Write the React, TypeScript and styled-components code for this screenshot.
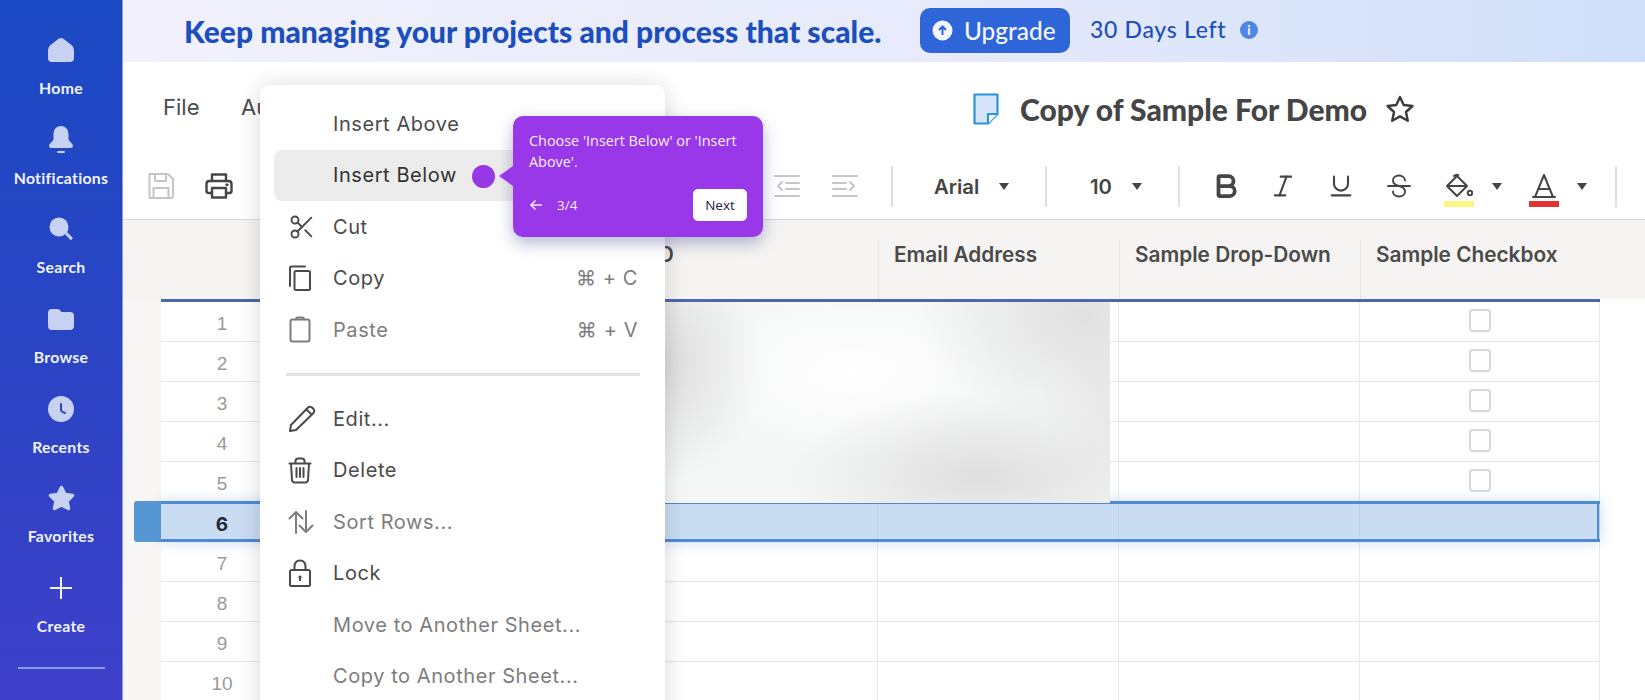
import React from "react";
import styled, { createGlobalStyle } from "styled-components";
import { Scissors, Bold, Italic, Underline } from "lucide-react";

const Global = createGlobalStyle`
  html, body { margin: 0; padding: 0; background: #fff; }
  * { box-sizing: border-box; }
`;

const Page = styled.div`
  position: relative;
  display: flex;
  width: 1645px;
  height: 700px;
  overflow: hidden;
  font-family: Inter, "Liberation Sans", sans-serif;
`;

const Sidebar = styled.nav`
  flex: 0 0 123px;
  display: flex;
  flex-direction: column;
  align-items: center;
  padding-top: 36px;
  background: linear-gradient(180deg, #1b49c3 0%, #2a44c4 50%, #3f40c9 100%);
  border-right: 1px solid #8f9ce0;
`;

const NavItem = styled.div`
  flex: 0 0 89.7px;
  display: flex;
  flex-direction: column;
  align-items: center;
  width: 100%;
`;

const NavIcon = styled.div`
  height: 28px;
  display: flex;
  align-items: center;
  justify-content: center;
  color: #c7d2f3;
`;

const NavLabel = styled.div`
  margin-top: 13px;
  line-height: 22px;
  color: #f0f3fd;
  font-family: Lato, sans-serif;
  font-weight: 700;
  font-size: 15.8px;
  letter-spacing: 0.3px;
`;

const NavRule = styled.div`
  width: 87px;
  height: 2px;
  margin-top: 3px;
  background: #8d96e2;
`;

const Main = styled.div`
  flex: 1;
  min-width: 0;
  display: flex;
  flex-direction: column;
`;

const Banner = styled.header`
  flex: 0 0 62px;
  display: flex;
  align-items: center;
  padding: 0 0 1px 61px;
  background: linear-gradient(90deg, #f2f1fc 0%, #e6eafb 55%, #cfdff9 100%);
`;

const BannerText = styled.div`
  width: 736px;
  font-family: Lato, sans-serif;
  font-weight: 900;
  font-size: 30px;
  color: #1c4fbe;
  white-space: nowrap;
`;

const UpgradeButton = styled.div`
  width: 150px;
  height: 45px;
  display: flex;
  align-items: center;
  gap: 11px;
  padding-left: 12px;
  border-radius: 10px;
  background: #2e65d9;
  color: #f3f6fe;
  font-family: Lato, sans-serif;
  font-weight: 500;
  font-size: 24.4px;
`;

const DaysLeft = styled.div`
  margin-left: 20px;
  margin-top: -4px;
  width: 150px;
  font-family: Lato, sans-serif;
  font-weight: 500;
  font-size: 23px;
  letter-spacing: 0.7px;
  color: #1e50b8;
  white-space: nowrap;
`;

const InfoDot = styled.div`
  width: 18px;
  height: 18px;
  margin-top: -2px;
  border-radius: 50%;
  background: #4f85e3;
  color: #e8effd;
  font-family: Lato, sans-serif;
  font-weight: 900;
  font-size: 13px;
  line-height: 18px;
  text-align: center;
`;

const TitleBar = styled.div`
  flex: 0 0 88px;
  display: flex;
  align-items: center;
  padding: 2px 0 0 40px;
`;

const MenuLabel = styled.div<{ $w: number }>`
  width: ${(p) => p.$w}px;
  font-size: 22px;
  color: #4b4b4b;
`;

const DocTitle = styled.div`
  display: flex;
  align-items: center;
  margin-left: 702px;
  margin-top: 4px;
`;

const TitleText = styled.h1`
  margin: 0 18px 0 21px;
  font-family: Lato, sans-serif;
  font-weight: 900;
  font-size: 30px;
  color: #454545;
  white-space: nowrap;
`;

const Toolbar = styled.div`
  flex: 0 0 70px;
  display: flex;
  align-items: center;
  padding: 3px 0 0 9px;
  border-bottom: 1px solid #dcdcdc;
`;

const Slot = styled.div<{ $w: number; $faded?: boolean }>`
  flex: 0 0 ${(p) => p.$w}px;
  display: flex;
  align-items: center;
  justify-content: center;
  color: ${(p) => (p.$faded ? "#c6c6c6" : "#454545")};
`;

const Gap = styled.div<{ $w: number }>`
  flex: 0 0 ${(p) => p.$w}px;
`;

const ToolSep = styled.div`
  flex: 0 0 2px;
  height: 41px;
  background: #e0e0e0;
`;

const Picker = styled.div<{ $w: number; $pad: number }>`
  flex: 0 0 ${(p) => p.$w}px;
  display: flex;
  align-items: center;
  gap: 20px;
  padding-left: ${(p) => p.$pad}px;
  color: #444;
  font-size: 20.3px;
  font-weight: 600;
`;

const Caret = styled.span`
  flex: none;
  width: 0;
  height: 0;
  border-left: 5px solid transparent;
  border-right: 5px solid transparent;
  border-top: 7px solid #444;
`;

const Swatch = styled.div<{ $color: string }>`
  width: 30px;
  height: 6px;
  margin-top: 2px;
  background: ${(p) => p.$color};
`;

const ColorTool = styled.div`
  display: flex;
  flex-direction: column;
  align-items: center;
  padding-top: 7px;
`;

const Sheet = styled.section`
  flex: 1;
  min-height: 0;
  display: flex;
  flex-direction: column;
  background: #fff;
`;

const HeaderBand = styled.div`
  flex: 0 0 79px;
  padding: 20px 0 0 38px;
  background: #f5f4f2;
`;

const Grid = styled.div`
  display: grid;
  grid-template-columns: 122px 355px 240px 241px 241px 240px;
  width: 1439px;
`;

const HeadGrid = styled(Grid)`
  height: 59px;
`;

const HeadCell = styled.div<{ $line?: boolean }>`
  padding: 1px 0 0 15px;
  border-left: ${(p) => (p.$line ? "1.5px solid #e4e4e4" : "none")};
  font-size: 20.8px;
  font-weight: 600;
  line-height: 28px;
  color: #4a4a4a;
  white-space: nowrap;
`;

const BodyWrap = styled.div`
  position: relative;
  flex: 1;
  border-left: 38px solid #f7f6f4;
`;

const TableTop = styled.div`
  width: 1439px;
  height: 3px;
  background: #4a69a9;
`;

const Row = styled(Grid)<{ $selected?: boolean }>`
  position: relative;
  height: ${(p) => (p.$selected ? "41px" : "40px")};
  margin-top: ${(p) => (p.$selected ? "-1px" : "0")};
  border-bottom: ${(p) => (p.$selected ? "3px solid #4f8ad0" : "1.5px solid #e6e6e6")};
  border-top: ${(p) => (p.$selected ? "3px solid #4f8ad0" : "none")};
  border-right: ${(p) => (p.$selected ? "3px solid #4f8ad0" : "none")};
  background: ${(p) => (p.$selected ? "#c9dcf2" : "#fff")};
  box-shadow: ${(p) => (p.$selected ? "0 0 14px rgba(79, 138, 208, 0.3)" : "none")};
  z-index: ${(p) => (p.$selected ? 1 : 0)};
  ${(p) =>
    p.$selected &&
    `&::before {
      content: "";
      position: absolute;
      left: -27px;
      top: -3px;
      bottom: -3px;
      width: 27px;
      border-radius: 3px 0 0 3px;
      background: #5596d3;
    }`}
`;

const NumCell = styled.div<{ $selected?: boolean }>`
  display: flex;
  align-items: center;
  justify-content: center;
  padding-top: 5px;
  font-family: ${(p) => (p.$selected ? "Inter" : '"Liberation Sans"')}, sans-serif;
  font-size: 19px;
  font-weight: ${(p) => (p.$selected ? 700 : 400)};
  color: ${(p) => (p.$selected ? "#1f2733" : "#9a9a9a")};
`;

const Cell = styled.div<{ $selected?: boolean }>`
  display: flex;
  align-items: center;
  justify-content: center;
  border-right: 1.5px solid ${(p) => (p.$selected ? "#bfd2e9" : "#e8e8e8")};
`;

const Check = styled.div`
  width: 22px;
  height: 23px;
  margin-bottom: 2px;
  border: 2px solid #d9d9d9;
  border-radius: 4px;
  background: #fff;
`;

const Redaction = styled.div`
  position: absolute;
  left: 501px;
  top: 3px;
  width: 448px;
  height: 201px;
  z-index: 2;
  background:
    radial-gradient(ellipse 100px 120px at 0px 60px, #dcdcdc 0%, rgba(220, 220, 220, 0) 100%),
    radial-gradient(ellipse 160px 110px at 420px 15px, #e1e1e1 0%, rgba(225, 225, 225, 0) 100%),
    radial-gradient(ellipse 190px 85px at 320px 175px, #dfdfdf 0%, rgba(223, 223, 223, 0) 100%),
    radial-gradient(ellipse 70px 110px at 448px 110px, #e9e9e9 0%, rgba(233, 233, 233, 0) 100%),
    radial-gradient(ellipse 170px 90px at 190px 70px, #ffffff 0%, rgba(255, 255, 255, 0) 100%),
    #f5f6f6;
`;

const Menu = styled.div`
  position: absolute;
  left: 260px;
  top: 85px;
  width: 405px;
  height: 640px;
  z-index: 5;
  padding-top: 13.4px;
  border-radius: 9px;
  background: #fff;
  box-shadow: 0 2px 22px rgba(0, 0, 0, 0.16);
`;

const MenuItem = styled.div<{ $active?: boolean; $muted?: boolean }>`
  height: 51.4px;
  margin: 0 14px;
  display: flex;
  align-items: center;
  padding: 0 13px 0 14px;
  border-radius: 8px;
  background: ${(p) => (p.$active ? "#ececec" : "transparent")};
  color: ${(p) => (p.$active ? "#333" : p.$muted ? "#7d7d7d" : "#4a4a4a")};
  font-size: 20px;
  letter-spacing: 0.57px;
`;

const ItemIcon = styled.div`
  flex: 0 0 45px;
  display: flex;
  align-items: center;
`;

const Shortcut = styled.span`
  margin-left: auto;
  color: #7d7d7d;
`;

const MenuRule = styled.div`
  height: 3px;
  margin: 18px 25px 17px 26px;
  background: #e2e2e2;
`;

const Dot = styled.div`
  position: absolute;
  left: 472px;
  top: 165px;
  width: 23px;
  height: 23px;
  border-radius: 50%;
  background: #9738e6;
  z-index: 6;
`;

const Tip = styled.aside`
  position: absolute;
  left: 513px;
  top: 116px;
  width: 250px;
  height: 121px;
  z-index: 6;
  padding: 14px 10px 16px 16px;
  display: flex;
  flex-direction: column;
  border-radius: 10px;
  background: #9838e8;
  box-shadow: 0 6px 16px rgba(40, 50, 130, 0.35);
  color: #f8eefe;
  font-family: "Open Sans", sans-serif;
  font-size: 14.4px;
  line-height: 21px;
  &::before {
    content: "";
    position: absolute;
    left: -14px;
    top: 50px;
    border-top: 10px solid transparent;
    border-bottom: 10px solid transparent;
    border-right: 14px solid #9838e8;
  }
`;

const TipFooter = styled.div`
  margin-top: auto;
  margin-right: 6px;
  display: flex;
  align-items: center;
  font-size: 13.5px;
`;

const TipCount = styled.span`
  margin-left: 14px;
`;

const NextButton = styled.div`
  margin-left: auto;
  width: 54px;
  height: 32px;
  border-radius: 5px;
  background: #fff;
  color: #1d1640;
  font-weight: 500;
  line-height: 32px;
  text-align: center;
`;

const Stroke: React.FC<{ w: number; h: number; vb?: string; sw?: number; children: React.ReactNode }> = ({
  w,
  h,
  vb,
  sw = 2,
  children,
}) => (
  <svg
    width={w}
    height={h}
    viewBox={vb ?? `0 0 ${w} ${h}`}
    fill="none"
    stroke="currentColor"
    strokeWidth={sw}
    strokeLinecap="round"
    strokeLinejoin="round"
  >
    {children}
  </svg>
);

const Fill: React.FC<{ w: number; h: number; children: React.ReactNode }> = ({ w, h, children }) => (
  <svg width={w} height={h} viewBox={`0 0 ${w} ${h}`} fill="currentColor">
    {children}
  </svg>
);

const navItems: { label: string; icon: React.ReactNode }[] = [
  {
    label: "Home",
    icon: (
      <Fill w={26} h={24}>
        <path d="M13 0 Q14.5 0 16 1.2 L23.5 7 Q26 9 26 12 V20 Q26 24 22 24 H4 Q0 24 0 20 V12 Q0 9 2.5 7 L10 1.2 Q11.5 0 13 0Z" />
      </Fill>
    ),
  },
  {
    label: "Notifications",
    icon: (
      <Fill w={24} h={27}>
        <path d="M12 0 C17 0 19.5 4 19.5 8.5 V13 C19.5 15 24 17.5 24 20 C24 21.3 23 22 21.5 22 H2.5 C1 22 0 21.3 0 20 C0 17.5 4.5 15 4.5 13 V8.5 C4.5 4 7 0 12 0Z" />
        <rect x="8" y="25" width="8" height="2" rx="1" />
      </Fill>
    ),
  },
  {
    label: "Search",
    icon: (
      <Fill w={24} h={24}>
        <circle cx="10" cy="10" r="9.5" />
        <path d="M16 17 L18 15 L23.5 20.5 Q24 22 22 23 Q21.5 23.3 21 22.5Z" />
      </Fill>
    ),
  },
  {
    label: "Browse",
    icon: (
      <Fill w={26} h={21}>
        <path d="M4 0 H9 Q11 0 12 1.2 L13.5 3 H22 Q26 3 26 7 V17 Q26 21 22 21 H4 Q0 21 0 17 V4 Q0 0 4 0Z" />
      </Fill>
    ),
  },
  {
    label: "Recents",
    icon: (
      <svg width="26" height="26" viewBox="0 0 26 26">
        <circle cx="13" cy="13" r="13" fill="currentColor" />
        <path d="M13 8 V14 Q13 15.5 17 17" fill="none" stroke="#3140c6" strokeWidth="2" strokeLinecap="round" />
      </svg>
    ),
  },
  {
    label: "Favorites",
    icon: (
      <Fill w={27} h={26}>
        <path
          d="M13.5 2.5 L17 9.5 L24.5 10.5 L19 16 L20.5 23.5 L13.5 20 L6.5 23.5 L8 16 L2.5 10.5 L10 9.5Z"
          stroke="currentColor"
          strokeWidth="3.5"
          strokeLinejoin="round"
        />
      </Fill>
    ),
  },
  {
    label: "Create",
    icon: (
      <svg width="24" height="24" viewBox="0 0 24 24" stroke="#f2f4fd" strokeWidth="2">
        <path d="M12 1 V23 M1 12 H23" />
      </svg>
    ),
  },
];

const menuIcons = {
  cut: <Scissors size={28} strokeWidth={1.6} />,
  copy: (
    <Stroke w={24} h={26}>
      <rect x="6.5" y="6" width="15.5" height="19" rx="1.5" />
      <path d="M2 21 V3 Q2 1.5 3.5 1.5 H17" />
    </Stroke>
  ),
  paste: (
    <Stroke w={24} h={27}>
      <rect x="2.5" y="3.5" width="19" height="22" rx="2" />
      <path d="M8 3.5 Q8 1.5 10 1.5 H14 Q16 1.5 16 3.5" />
    </Stroke>
  ),
  edit: (
    <Stroke w={28} h={28}>
      <path d="M2 26 L3 20 L20 2.5 Q22 1 24 2.5 L25.5 4 Q27 6 25.5 8 L8 25 Z" />
      <path d="M18.5 4.5 L23.5 9.5" />
    </Stroke>
  ),
  trash: (
    <Stroke w={24} h={27}>
      <path d="M1.5 6.5 H22.5 M3 6.5 L4 23 Q4.2 25.5 7 25.5 H17 Q19.8 25.5 20 23 L21 6.5" />
      <path d="M7.5 6 V4 Q7.5 1.5 10 1.5 H14 Q16.5 1.5 16.5 4 V6" />
      <path d="M8.5 11 V20 M12 11 V20 M15.5 11 V20" />
    </Stroke>
  ),
  sort: (
    <Stroke w={26} h={24}>
      <path d="M8 23 V2 M1.5 8.5 L8 2 L14.5 8.5" />
      <path d="M18 1 V22 M11.5 15.5 L18 22 L24.5 15.5" />
    </Stroke>
  ),
  lock: (
    <svg width="24" height="28" viewBox="0 0 24 28" fill="none" stroke="currentColor" strokeWidth="2">
      <rect x="2" y="11" width="20" height="16" rx="1.5" />
      <path d="M6.5 11 V8 Q6.5 1.5 12 1.5 Q17.5 1.5 17.5 8 V11" />
      <circle cx="12" cy="18" r="1.6" fill="currentColor" stroke="none" />
      <path d="M12 18 V22" />
    </svg>
  ),
};

type Item = { label: string; icon?: React.ReactNode; key?: string; muted?: boolean; active?: boolean };

const upperItems: Item[] = [
  { label: "Insert Above" },
  { label: "Insert Below", active: true },
  { label: "Cut", icon: menuIcons.cut },
  { label: "Copy", icon: menuIcons.copy, key: "⌘ + C" },
  { label: "Paste", icon: menuIcons.paste, key: "⌘ + V", muted: true },
];

const lowerItems: Item[] = [
  { label: "Edit...", icon: menuIcons.edit },
  { label: "Delete", icon: menuIcons.trash },
  { label: "Sort Rows...", icon: menuIcons.sort, muted: true },
  { label: "Lock", icon: menuIcons.lock },
  { label: "Move to Another Sheet...", muted: true },
  { label: "Copy to Another Sheet...", muted: true },
];

const MenuRow: React.FC<{ item: Item }> = ({ item }) => (
  <MenuItem $active={item.active} $muted={item.muted}>
    <ItemIcon>{item.icon}</ItemIcon>
    {item.label}
    {item.key && <Shortcut>{item.key}</Shortcut>}
  </MenuItem>
);

const headers = ["", "", "ID", "Email Address", "Sample Drop-Down", "Sample Checkbox"];
const rows = Array.from({ length: 10 }, (_, i) => i + 1);

export default function App() {
  return (
    <Page>
      <Global />
      <Sidebar>
        {navItems.map((n) => (
          <NavItem key={n.label}>
            <NavIcon>{n.icon}</NavIcon>
            <NavLabel>{n.label}</NavLabel>
          </NavItem>
        ))}
        <NavRule />
      </Sidebar>

      <Main>
        <Banner>
          <BannerText>Keep managing your projects and process that scale.</BannerText>
          <UpgradeButton>
            <svg width="21" height="21" viewBox="0 0 21 21">
              <circle cx="10.5" cy="10.5" r="10" fill="#f3f6fe" />
              <path d="M10.5 15 V7 M7 10 L10.5 6.5 L14 10" fill="none" stroke="#2e65d9" strokeWidth="2" />
            </svg>
            Upgrade
          </UpgradeButton>
          <DaysLeft>30 Days Left</DaysLeft>
          <InfoDot>i</InfoDot>
        </Banner>

        <TitleBar>
          <MenuLabel $w={78}>File</MenuLabel>
          <MenuLabel $w={30}>Au</MenuLabel>
          <DocTitle>
            <svg width="26" height="32" viewBox="0 0 26 32">
              <path
                d="M1.5 1.5 H24.5 V21 L15 30.5 H1.5 Z"
                fill="#d5e4f8"
                stroke="#2b93dc"
                strokeWidth="2.2"
                strokeLinejoin="round"
              />
              <path d="M24.5 21 H15 V30.5" fill="#fff" stroke="#2b93dc" strokeWidth="2.2" strokeLinejoin="round" />
            </svg>
            <TitleText>Copy of Sample For Demo</TitleText>
            <svg width="30" height="30" viewBox="0 0 30 30" fill="none" stroke="#3c3c3c" strokeWidth="2.4" strokeLinejoin="round">
              <path d="M15 3 L18.7 11 L27.5 12 L21 18 L22.8 26.8 L15 22.4 L7.2 26.8 L9 18 L2.5 12 L11.3 11 Z" />
            </svg>
          </DocTitle>
        </TitleBar>

        <Toolbar>
          <Slot $w={58} $faded>
            <Stroke w={28} h={28}>
              <path d="M2.5 2 H21 L26 7 V24 Q26 26 24 26 H2.5 Z" />
              <path d="M8 2 V9 H19 V2 M6.5 26 V16 H21.5 V26" />
            </Stroke>
          </Slot>
          <Slot $w={58}>
            <Stroke w={28} h={28} sw={2.4}>
              <path d="M7 9 V2.5 H21 V9" />
              <path d="M7 21 H3.5 Q1.5 21 1.5 19 V12 Q1.5 9 4.5 9 H23.5 Q26.5 9 26.5 12 V19 Q26.5 21 24.5 21 H21" />
              <rect x="7" y="16" width="14" height="9.5" />
              <path d="M21.5 12.7 H22.5" />
            </Stroke>
          </Slot>
          <Gap $w={510} />
          <Slot $w={58} $faded>
            <Stroke w={26} h={24}>
              <path d="M1 2 H25 M1 22 H25 M12 9 H25 M12 15 H25 M8 8 L4 12 L8 16" />
            </Stroke>
          </Slot>
          <Slot $w={58} $faded>
            <Stroke w={26} h={24}>
              <path d="M1 2 H25 M1 22 H25 M1 9 H14 M1 15 H14 M18 8 L22 12 L18 16" />
            </Stroke>
          </Slot>
          <Gap $w={17} />
          <ToolSep />
          <Picker $w={152} $pad={41}>
            Arial <Caret />
          </Picker>
          <ToolSep />
          <Picker $w={131} $pad={43}>
            10 <Caret />
          </Picker>
          <ToolSep />
          <Gap $w={17} />
          <Slot $w={57}>
            <Bold size={30} strokeWidth={3} />
          </Slot>
          <Slot $w={57}>
            <Italic size={28} strokeWidth={1.8} />
          </Slot>
          <Slot $w={59}>
            <Underline size={28} strokeWidth={1.8} />
          </Slot>
          <Slot $w={58}>
            <Stroke w={24} h={24} sw={1.9}>
              <path d="M1 12 H23" />
              <path d="M18 6.5 C18 3.5 15 1.5 12 1.5 C8.5 1.5 6 3.5 6 6.5 C6 9 8 11 12 12 C16 13 18 15 18 17.5 C18 20.5 15.5 22.5 12 22.5 C8.5 22.5 6 20.5 6 17.5" />
            </Stroke>
          </Slot>
          <Slot $w={62}>
            <ColorTool>
              <Stroke w={28} h={26}>
                <path d="M12 3 L22 13 L12 23 L2 13 Z M2.5 13 H21.5" />
                <path d="M9 3 Q11 1 13 2" />
                <circle cx="25" cy="20" r="2.2" />
              </Stroke>
              <Swatch $color="#f9f683" />
            </ColorTool>
          </Slot>
          <Gap $w={2} />
          <Caret />
          <Gap $w={12} />
          <Slot $w={60}>
            <ColorTool>
              <Stroke w={26} h={26}>
                <path d="M2 24 H24 M4 24 L13 2 L22 24 M7 16 H19" />
              </Stroke>
              <Swatch $color="#e33232" />
            </ColorTool>
          </Slot>
          <Gap $w={3} />
          <Caret />
          <Gap $w={28} />
          <ToolSep />
        </Toolbar>

        <Sheet>
          <HeaderBand>
            <HeadGrid>
              {headers.map((h, i) => (
                <HeadCell key={i} $line={i > 2}>
                  {h}
                </HeadCell>
              ))}
            </HeadGrid>
          </HeaderBand>
          <BodyWrap>
            <TableTop />
            <Redaction />
            {rows.map((r) => {
              const selected = r === 6;
              return (
                <Row key={r} $selected={selected}>
                  <NumCell $selected={selected}>{r}</NumCell>
                  <Cell $selected={selected} />
                  <Cell $selected={selected} />
                  <Cell $selected={selected} />
                  <Cell $selected={selected} />
                  <Cell $selected={selected}>{r <= 5 && <Check />}</Cell>
                </Row>
              );
            })}
          </BodyWrap>
        </Sheet>
      </Main>

      <Menu>
        {upperItems.map((it) => (
          <MenuRow key={it.label} item={it} />
        ))}
        <MenuRule />
        {lowerItems.map((it) => (
          <MenuRow key={it.label} item={it} />
        ))}
      </Menu>

      <Dot />
      <Tip>
        Choose 'Insert Below' or 'Insert Above'.
        <TipFooter>
          <svg width="14" height="12" viewBox="0 0 14 12" fill="none" stroke="#f3e6fd" strokeWidth="1.6">
            <path d="M13 6 H2 M6.5 1.5 L2 6 L6.5 10.5" />
          </svg>
          <TipCount>3/4</TipCount>
          <NextButton>Next</NextButton>
        </TipFooter>
      </Tip>
    </Page>
  );
}
